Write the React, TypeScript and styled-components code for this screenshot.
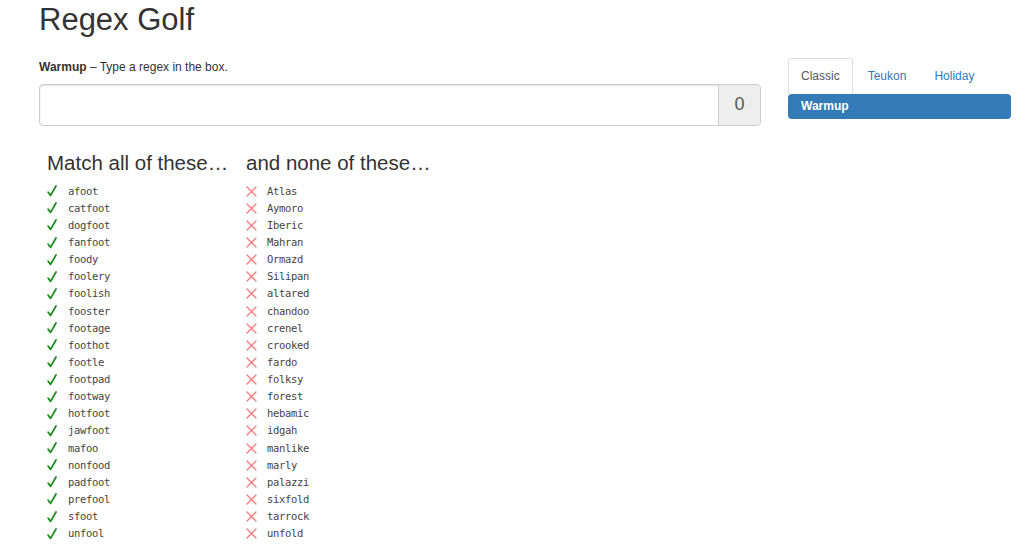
import React from 'react';
import styled, { createGlobalStyle } from 'styled-components';

const GlobalStyle = createGlobalStyle`
  html, body {
    margin: 0;
    padding: 0;
    background: #ffffff;
  }
  body {
    font-family: "Liberation Sans", Arial, Helvetica, sans-serif;
    font-size: 12px;
    line-height: 1.428571;
    color: #333333;
  }
`;

const matches = [
  'afoot', 'catfoot', 'dogfoot', 'fanfoot', 'foody', 'foolery', 'foolish', 'fooster', 'footage', 'foothot',
  'footle', 'footpad', 'footway', 'hotfoot', 'jawfoot', 'mafoo', 'nonfood', 'padfoot', 'prefool', 'sfoot', 'unfool',
];

const nonMatches = [
  'Atlas', 'Aymoro', 'Iberic', 'Mahran', 'Ormazd', 'Silipan', 'altared', 'chandoo', 'crenel', 'crooked',
  'fardo', 'folksy', 'forest', 'hebamic', 'idgah', 'manlike', 'marly', 'palazzi', 'sixfold', 'tarrock', 'unfold',
];

const tabs = ['Classic', 'Teukon', 'Holiday'];

const Page = styled.div`
  padding: 0 13px 0 39px;
  height: 547px;
  overflow: hidden;
  box-sizing: border-box;
`;

const Title = styled.h1`
  margin: 3px 0 21px;
  font-size: 31px;
  font-weight: 400;
  line-height: 1.1;
  color: #333333;
`;

const Columns = styled.div`
  display: grid;
  grid-template-columns: 722px 223px;
  column-gap: 27px;
  align-items: start;
`;

const Main = styled.div`
  display: flex;
  flex-direction: column;
`;

const Subtitle = styled.p`
  margin: 1px 0 8px;
  font-size: 12px;
  line-height: 17px;
  color: #333333;

  strong {
    font-weight: 700;
  }
`;

const InputGroup = styled.div`
  display: flex;
  height: 42px;
  border: 1px solid #cccccc;
  border-radius: 4px;
  box-sizing: border-box;
  box-shadow: inset 0 1px 2px rgba(0, 0, 0, 0.12);
  overflow: hidden;
`;

const RegexInput = styled.input`
  flex: 1;
  border: none;
  outline: none;
  padding: 0 12px;
  font-family: "Liberation Mono", monospace;
  font-size: 16px;
  background: transparent;
`;

const Addon = styled.span`
  width: 41px;
  display: flex;
  align-items: center;
  justify-content: center;
  background: #eeeeee;
  border-left: 1px solid #cccccc;
  font-size: 18px;
  color: #555555;
`;

const Lists = styled.div`
  display: flex;
  margin: 26px 0 0 8px;
`;

const ListColumn = styled.div<{ $width?: number }>`
  width: ${(props) => (props.$width ? `${props.$width}px` : 'auto')};
  display: flex;
  flex-direction: column;
`;

const ListHeading = styled.h3`
  margin: 0 0 8px;
  font-size: 20.5px;
  font-weight: 400;
  line-height: 1.1;
  color: #333333;
  white-space: nowrap;
`;

const WordList = styled.ul`
  list-style: none;
  margin: 0;
  padding: 0;
`;

const WordRow = styled.li`
  display: flex;
  align-items: center;
  height: 17.14px;
`;

const Mark = styled.span`
  width: 21px;
  display: flex;
  align-items: center;
`;

const Word = styled.span`
  font-family: "DejaVu Sans Mono", "Liberation Mono", monospace;
  font-size: 10.5px;
  letter-spacing: -0.32px;
  color: #444444;
`;

const Sidebar = styled.div`
  display: flex;
  flex-direction: column;
`;

const TabBar = styled.ul`
  display: flex;
  list-style: none;
  margin: 0;
  padding: 0;
  height: 36px;
`;

const Tab = styled.li<{ $active: boolean }>`
  margin-right: 2px;
  padding: 0 12px;
  display: flex;
  align-items: center;
  font-size: 12px;
  box-sizing: border-box;
  border: 1px solid ${(props) => (props.$active ? '#dddddd' : 'transparent')};
  border-bottom: none;
  border-radius: 4px 4px 0 0;
  background: ${(props) => (props.$active ? '#ffffff' : 'transparent')};
  color: ${(props) => (props.$active ? '#555555' : '#337ab7')};
`;

const LevelItem = styled.div`
  height: 25px;
  display: flex;
  align-items: center;
  padding: 0 13px;
  background: #337ab7;
  border-radius: 4px;
  color: #ffffff;
  font-weight: 700;
  font-size: 12px;
`;

const CheckIcon = (): React.ReactElement => (
  <svg width='10' height='12' viewBox='0 0 10 12'>
    <path d='M1.2 7.2 L3.6 10.4 L9 1' fill='none' stroke='#1e8c1e' strokeWidth='1.8' strokeLinecap='round' strokeLinejoin='round' />
  </svg>
);

const CrossIcon = (): React.ReactElement => (
  <svg width='11' height='11' viewBox='0 0 11 11'>
    <path d='M1 1 L10 10 M10 1 L1 10' fill='none' stroke='#f77b7b' strokeWidth='1.3' strokeLinecap='round' />
  </svg>
);

const App = (): React.ReactElement => {
  return (
    <Page>
      <GlobalStyle />
      <Title>Regex Golf</Title>
      <Columns>
        <Main>
          <Subtitle><strong>Warmup</strong> – Type a regex in the box.</Subtitle>
          <InputGroup>
            <RegexInput type='text' />
            <Addon>0</Addon>
          </InputGroup>
          <Lists>
            <ListColumn $width={199}>
              <ListHeading>Match all of these…</ListHeading>
              <WordList>
                {matches.map((word) => (
                  <WordRow key={word}>
                    <Mark><CheckIcon /></Mark>
                    <Word>{word}</Word>
                  </WordRow>
                ))}
              </WordList>
            </ListColumn>
            <ListColumn>
              <ListHeading>and none of these…</ListHeading>
              <WordList>
                {nonMatches.map((word) => (
                  <WordRow key={word}>
                    <Mark><CrossIcon /></Mark>
                    <Word>{word}</Word>
                  </WordRow>
                ))}
              </WordList>
            </ListColumn>
          </Lists>
        </Main>
        <Sidebar>
          <TabBar>
            {tabs.map((tab) => (
              <Tab key={tab} $active={tab === 'Classic'}>{tab}</Tab>
            ))}
          </TabBar>
          <LevelItem>Warmup</LevelItem>
        </Sidebar>
      </Columns>
    </Page>
  );
};

export default App;
